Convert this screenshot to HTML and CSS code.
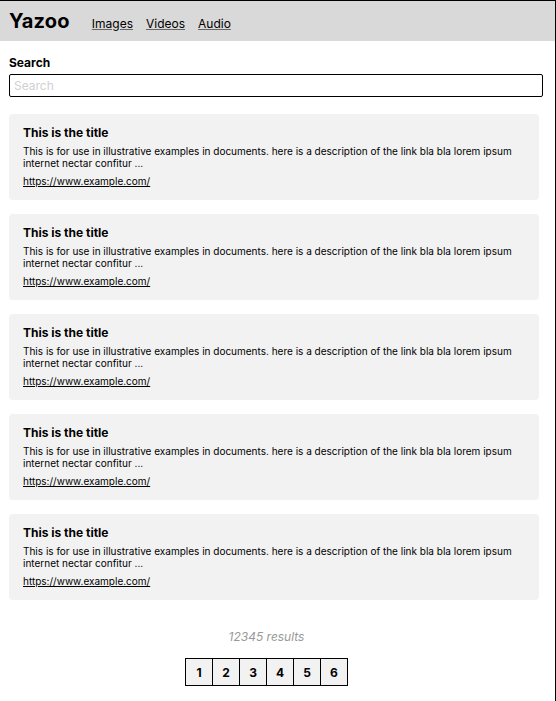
FILE: index.html
```html
<!DOCTYPE html>
<html>
<head>
<meta charset="utf-8">
<link rel="stylesheet" href="styles.css">
</head>
<body>
<div class="page">
  <header class="topbar">
    <div class="logo">Yazoo</div>
    <nav class="nav">
      <a href="#">Images</a>
      <a href="#">Videos</a>
      <a href="#">Audio</a>
    </nav>
  </header>
  <main class="main">
    <label class="search-label">Search</label>
    <input class="search-input" type="text" placeholder="Search">
    <div class="results">
      <div class="card">
        <div class="card-title">This is the title</div>
        <div class="card-desc">This is for use in illustrative examples in documents. here is a description of the link bla bla lorem ipsum internet nectar confitur ...</div>
        <a class="card-url" href="#">https://www.example.com/</a>
      </div>
      <div class="card">
        <div class="card-title">This is the title</div>
        <div class="card-desc">This is for use in illustrative examples in documents. here is a description of the link bla bla lorem ipsum internet nectar confitur ...</div>
        <a class="card-url" href="#">https://www.example.com/</a>
      </div>
      <div class="card">
        <div class="card-title">This is the title</div>
        <div class="card-desc">This is for use in illustrative examples in documents. here is a description of the link bla bla lorem ipsum internet nectar confitur ...</div>
        <a class="card-url" href="#">https://www.example.com/</a>
      </div>
      <div class="card">
        <div class="card-title">This is the title</div>
        <div class="card-desc">This is for use in illustrative examples in documents. here is a description of the link bla bla lorem ipsum internet nectar confitur ...</div>
        <a class="card-url" href="#">https://www.example.com/</a>
      </div>
      <div class="card">
        <div class="card-title">This is the title</div>
        <div class="card-desc">This is for use in illustrative examples in documents. here is a description of the link bla bla lorem ipsum internet nectar confitur ...</div>
        <a class="card-url" href="#">https://www.example.com/</a>
      </div>
    </div>
    <div class="footer">
      <div class="count">12345 results</div>
      <div class="pager">
        <span class="pg">1</span><span class="pg">2</span><span class="pg">3</span><span class="pg">4</span><span class="pg">5</span><span class="pg">6</span>
      </div>
    </div>
  </main>
</div>
</body>
</html>
```

FILE: styles.css
```css
* { box-sizing: border-box; }
html, body { margin: 0; padding: 0; background: #fff; }
body { font-family: Inter, "Noto Sans", sans-serif; color: #000; }
.page {
  width: 556px;
  min-height: 701px;
  border-top: 1px solid #000;
  border-right: 1px solid #000;
}
.topbar {
  height: 40px;
  background: #d9d9d9;
  display: flex;
  align-items: center;
  padding-left: 9px;
}
.logo {
  font-size: 20px;
  font-weight: 700;
  margin-top: -1px;
  letter-spacing: 0.2px;
}
.nav {
  display: flex;
  gap: 13px;
  margin-left: 22px;
  margin-top: 4px;
}
.nav a {
  font-size: 12px;
  color: #000;
  text-decoration: underline;
  text-decoration-color: #666;
}
.main {
  padding: 14px 0 0 9px;
}
.search-label {
  display: block;
  font-size: 12px;
  font-weight: 700;
  line-height: 15px;
}
.search-input {
  display: block;
  margin-top: 4px;
  width: 534px;
  height: 23px;
  border: 1px solid #000;
  border-radius: 2px;
  padding: 0 4px;
  font-family: inherit;
  font-size: 12px;
  outline: none;
}
.search-input::placeholder { color: #d0d0d0; }
.results {
  margin-top: 17px;
  display: flex;
  flex-direction: column;
  gap: 14px;
  width: 530px;
}
.card {
  background: #f2f2f2;
  border-radius: 4px;
  height: 86px;
  padding: 11px 14px 0 14px;
}
.card-title {
  font-size: 12px;
  font-weight: 700;
  line-height: 15px;
}
.card-desc {
  margin-top: 5px;
  font-size: 10px;
  line-height: 12px;
}
.card-url {
  display: inline-block;
  margin-top: 5px;
  font-size: 10px;
  line-height: 12px;
  color: #000;
  text-decoration: underline;
}
.footer {
  width: 515px;
  display: flex;
  flex-direction: column;
  align-items: center;
  margin-top: 30px;
}
.count {
  font-size: 12px;
  font-style: italic;
  color: #999;
  line-height: 14px;
}
.pager {
  display: flex;
  margin-top: 14px;
}
.pg {
  width: 28px;
  height: 28px;
  border: 1px solid #000;
  margin-left: -1px;
  background: #f2f2f2;
  display: flex;
  align-items: center;
  justify-content: center;
  font-size: 12px;
  font-weight: 700;
}
.pg:first-child { margin-left: 0; }
```
